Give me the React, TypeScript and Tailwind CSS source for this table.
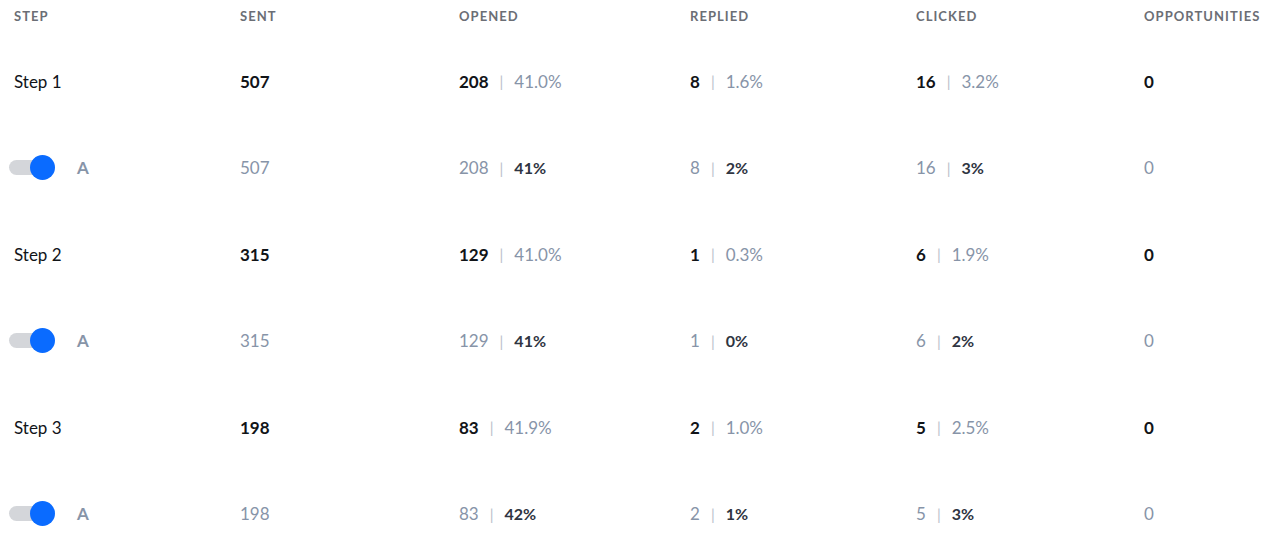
import React from 'react';

type Step = {
    name: string;
    sent: number;
    opened: [number, string];
    replied: [number, string];
    clicked: [number, string];
    opps: number;
    variant: { sent: number; opened: [number, string]; replied: [number, string]; clicked: [number, string]; opps: number };
};

const steps: Step[] = [
    {
        name: 'Step 1', sent: 507, opened: [208, '41.0%'], replied: [8, '1.6%'], clicked: [16, '3.2%'], opps: 0,
        variant: { sent: 507, opened: [208, '41%'], replied: [8, '2%'], clicked: [16, '3%'], opps: 0 },
    },
    {
        name: 'Step 2', sent: 315, opened: [129, '41.0%'], replied: [1, '0.3%'], clicked: [6, '1.9%'], opps: 0,
        variant: { sent: 315, opened: [129, '41%'], replied: [1, '0%'], clicked: [6, '2%'], opps: 0 },
    },
    {
        name: 'Step 3', sent: 198, opened: [83, '41.9%'], replied: [2, '1.0%'], clicked: [5, '2.5%'], opps: 0,
        variant: { sent: 198, opened: [83, '42%'], replied: [2, '1%'], clicked: [5, '3%'], opps: 0 },
    },
];

const cols = 'grid grid-cols-[226px_219px_231px_226px_228px_1fr] pl-[14px]';

const Split = ({ value, pct, variant }: { value: number; pct: string; variant?: boolean }) => (
    <div className="flex items-center">
        <span className={variant ? 'text-[#8794a8]' : 'font-bold text-[#111418]'}>{value}</span>
        <span className="mx-[11px] text-[#b9c0ca] text-[15px]">|</span>
        <span className={variant ? 'font-bold text-[#2f3542] text-[16px]' : 'text-[#8794a8]'}>{pct}</span>
    </div>
);

const Toggle = () => (
    <div className="relative w-[46px] h-[26px] flex items-center -ml-[5px]">
        <div className="w-[38px] h-[15px] rounded-full bg-[#d4d6da]" />
        <div className="absolute left-[21px] top-0 w-[25px] h-[25px] rounded-full bg-[#0a6bff]" />
    </div>
);

export default function App() {
    return (
        <div className="w-[1280px] h-[541px] overflow-hidden bg-white text-[17px]" style={{ fontFamily: 'Lato, "Open Sans", sans-serif' }}>
            {/* header */}
            <div className={`${cols} h-[38px] pt-[7px] text-[13px] font-bold tracking-[0.08em] text-[#6b6e75]`}>
                <span>STEP</span>
                <span>SENT</span>
                <span>OPENED</span>
                <span>REPLIED</span>
                <span>CLICKED</span>
                <span>OPPORTUNITIES</span>
            </div>

            {steps.map(s => (
                <React.Fragment key={s.name}>
                    <div className={`${cols} h-[86.5px] items-center`}>
                        <span className="text-[#111418]">{s.name}</span>
                        <span className="font-bold text-[#111418]">{s.sent}</span>
                        <Split value={s.opened[0]} pct={s.opened[1]} />
                        <Split value={s.replied[0]} pct={s.replied[1]} />
                        <Split value={s.clicked[0]} pct={s.clicked[1]} />
                        <span className="font-bold text-[#111418]">{s.opps}</span>
                    </div>
                    <div className={`${cols} h-[86.5px] items-center`}>
                        <div className="flex items-center gap-[22px]">
                            <Toggle />
                            <span className="font-bold text-[#8794a8]">A</span>
                        </div>
                        <span className="text-[#8794a8]">{s.variant.sent}</span>
                        <Split value={s.variant.opened[0]} pct={s.variant.opened[1]} variant />
                        <Split value={s.variant.replied[0]} pct={s.variant.replied[1]} variant />
                        <Split value={s.variant.clicked[0]} pct={s.variant.clicked[1]} variant />
                        <span className="text-[#8794a8]">{s.variant.opps}</span>
                    </div>
                </React.Fragment>
            ))}
        </div>
    );
}
